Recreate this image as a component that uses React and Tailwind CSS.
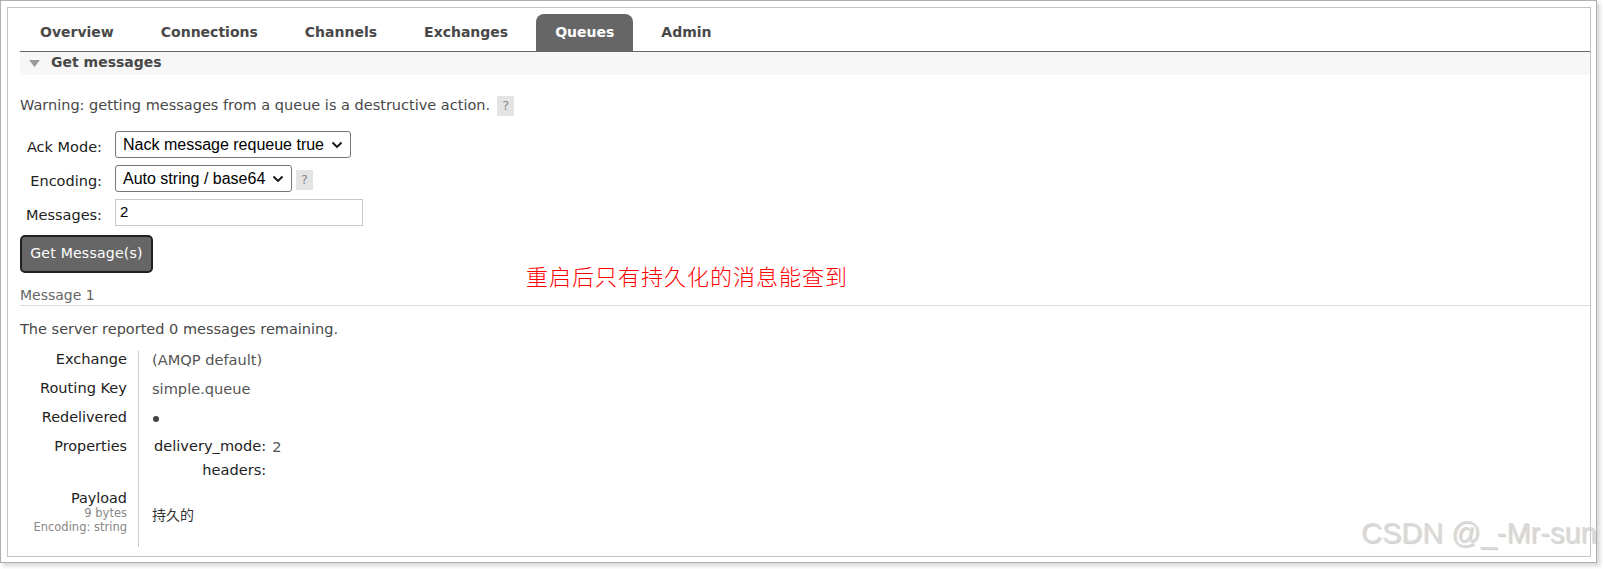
import React from "react";

const tabs = ["Overview", "Connections", "Channels", "Exchanges", "Queues", "Admin"];

function Help() {
  return (
    <span className="inline-flex items-center justify-center w-[17px] h-[20px] bg-[#e4e4e4] text-[#888] text-[13px] leading-none">?</span>
  );
}

function Chevron() {
  return (
    <svg width="12" height="8" viewBox="0 0 12 8" className="ml-auto mr-[1px]">
      <path d="M1.5 1.5 L6 6 L10.5 1.5" fill="none" stroke="#111" strokeWidth="1.8" />
    </svg>
  );
}

export default function App() {
  return (
    <div className="relative w-[1603px] h-[569px] bg-white font-['DejaVu_Sans',sans-serif]">
      <div className="w-[1597px] h-[563px] border border-[#b0b0b0] pt-[6px] pl-[6px] pr-[5px] pb-[5px] shadow-[3px_3px_4px_rgba(0,0,0,0.16)]">
        <div className="relative h-full border border-[#c4c4c4] pl-[12px] pt-[6px]">
          {/* tabs */}
          <div className="flex h-[38px] border-b border-[#666] pl-[1px] gap-[9px]">
            {tabs.map((t) => (
              <div
                key={t}
                className={
                  t === "Queues"
                    ? "h-[37px] px-[19px] flex items-center bg-[#666] text-white rounded-t-[8px] font-bold text-[14px]"
                    : "h-[37px] px-[19px] flex items-center text-[#484848] font-bold text-[14px]"
                }
              >
                {t}
              </div>
            ))}
          </div>

          {/* section header */}
          <div className="h-[23px] bg-[#f7f7f7] flex items-center pb-[3px]">
            <svg width="11" height="7" viewBox="0 0 11 7" className="ml-[9px] mt-[2px]">
              <path d="M0 0 L11 0 L5.5 7 Z" fill="#999" />
            </svg>
            <span className="ml-[11px] font-bold text-[14px] text-[#484848]">Get messages</span>
          </div>

          {/* warning */}
          <div className="mt-[21px] flex items-center h-[20px] text-[14.5px] text-[#484848]">
            <span>Warning: getting messages from a queue is a destructive action.</span>
            <span className="ml-[7px]"><Help /></span>
          </div>

          {/* form */}
          <div className="mt-[15px] flex flex-col gap-[7px]">
            <div className="flex items-start">
              <div className="w-[82px] text-right pt-[6px] text-[14.5px] leading-[20px] text-[#222]">Ack Mode:</div>
              <div className="ml-[13px] h-[27px] w-[236px] border border-[#767676] rounded-[3px] flex items-center pl-[7px] pr-[6px] font-['Liberation_Sans',sans-serif] text-[16px] text-black">
                <span>Nack message requeue true</span>
                <Chevron />
              </div>
            </div>
            <div className="flex items-start">
              <div className="w-[82px] text-right pt-[6px] text-[14.5px] leading-[20px] text-[#222]">Encoding:</div>
              <div className="ml-[13px] h-[27px] w-[177px] border border-[#767676] rounded-[3px] flex items-center pl-[7px] pr-[6px] font-['Liberation_Sans',sans-serif] text-[16px] text-black">
                <span>Auto string / base64</span>
                <Chevron />
              </div>
              <span className="ml-[4px] mt-[2px]"><Help /></span>
            </div>
            <div className="flex items-start">
              <div className="w-[82px] text-right pt-[6px] text-[14.5px] leading-[20px] text-[#222]">Messages:</div>
              <div className="ml-[13px] h-[27px] w-[248px] border border-[#c8c8c8] flex items-center pl-[4px] font-['Liberation_Sans',sans-serif] text-[15px] text-black">
                2
              </div>
            </div>
          </div>

          {/* button */}
          <button className="mt-[9px] w-[133px] h-[38px] bg-[#666] border-2 border-[#222] rounded-[5px] text-white text-[14.1px] tracking-[0.2px] flex items-center justify-center">
            Get Message(s)
          </button>

          {/* annotation */}
          <div className="absolute left-[518px] top-[256px] text-[22px] leading-none tracking-[1px] text-[#ff0000] font-['Noto_Sans_CJK_SC',serif] font-light">
            重启后只有持久化的消息能查到
          </div>

          {/* message heading */}
          <div className="mt-[12px] h-[21px] leading-[20px] text-[14px] text-[#666] border-b border-[#ddd]">
            Message 1
          </div>

          <div className="mt-[13px] leading-[20px] text-[14.5px] text-[#484848]">
            The server reported 0 messages remaining.
          </div>

          {/* details table */}
          <div className="mt-[12px] flex flex-col text-[14.6px] leading-[16px]">
            <div className="flex">
              <div className="w-[119px] text-right pr-[11px] pb-[13px] border-r border-[#ccc] text-[#222] text-[14.6px]">Exchange</div>
              <div className="pl-[13px] pt-[1px] text-[#555]">(AMQP default)</div>
            </div>
            <div className="flex">
              <div className="w-[119px] text-right pr-[11px] pb-[13px] border-r border-[#ccc] text-[#222] text-[14.6px]">Routing Key</div>
              <div className="pl-[13px] pt-[1px] text-[#555]">simple.queue</div>
            </div>
            <div className="flex">
              <div className="w-[119px] text-right pr-[11px] pb-[13px] border-r border-[#ccc] text-[#222] text-[14.4px]">Redelivered</div>
              <div className="pl-[14px] pt-[7px]">
                <div className="w-[6px] h-[6px] rounded-full bg-[#444]"></div>
              </div>
            </div>
            <div className="flex">
              <div className="w-[119px] text-right pr-[11px] h-[52px] border-r border-[#ccc] text-[#222] text-[14.4px]">Properties</div>
              <div className="pl-[15px]">
                <div className="grid grid-cols-[auto_auto] gap-x-[6px] gap-y-[7px]">
                  <div className="text-right text-[#222]">delivery_mode:</div>
                  <div className="text-[#555] pt-[1px]">2</div>
                  <div className="text-right text-[#222]">headers:</div>
                  <div></div>
                </div>
              </div>
            </div>
            <div className="flex">
              <div className="w-[119px] text-right pr-[11px] pb-[13px] border-r border-[#ccc]">
                <div className="text-[#222] text-[14.4px]">Payload</div>
                <div className="text-[11.5px] leading-[14px] text-[#888]">9 bytes</div>
                <div className="text-[11.5px] leading-[14px] text-[#888]">Encoding: string</div>
              </div>
              <div className="pl-[13px] pt-[16px] text-[#333] font-['Noto_Sans_CJK_SC',sans-serif] text-[14px]">持久的</div>
            </div>
          </div>
        </div>
      </div>

      {/* watermark */}
      <div className="absolute left-[1361px] top-[519px] text-[29px] leading-none font-['Liberation_Sans',sans-serif] text-[#dadada] [text-shadow:1px_1px_1px_rgba(0,0,0,0.2)] whitespace-nowrap">
        CSDN @_-Mr-sun
      </div>
    </div>
  );
}
